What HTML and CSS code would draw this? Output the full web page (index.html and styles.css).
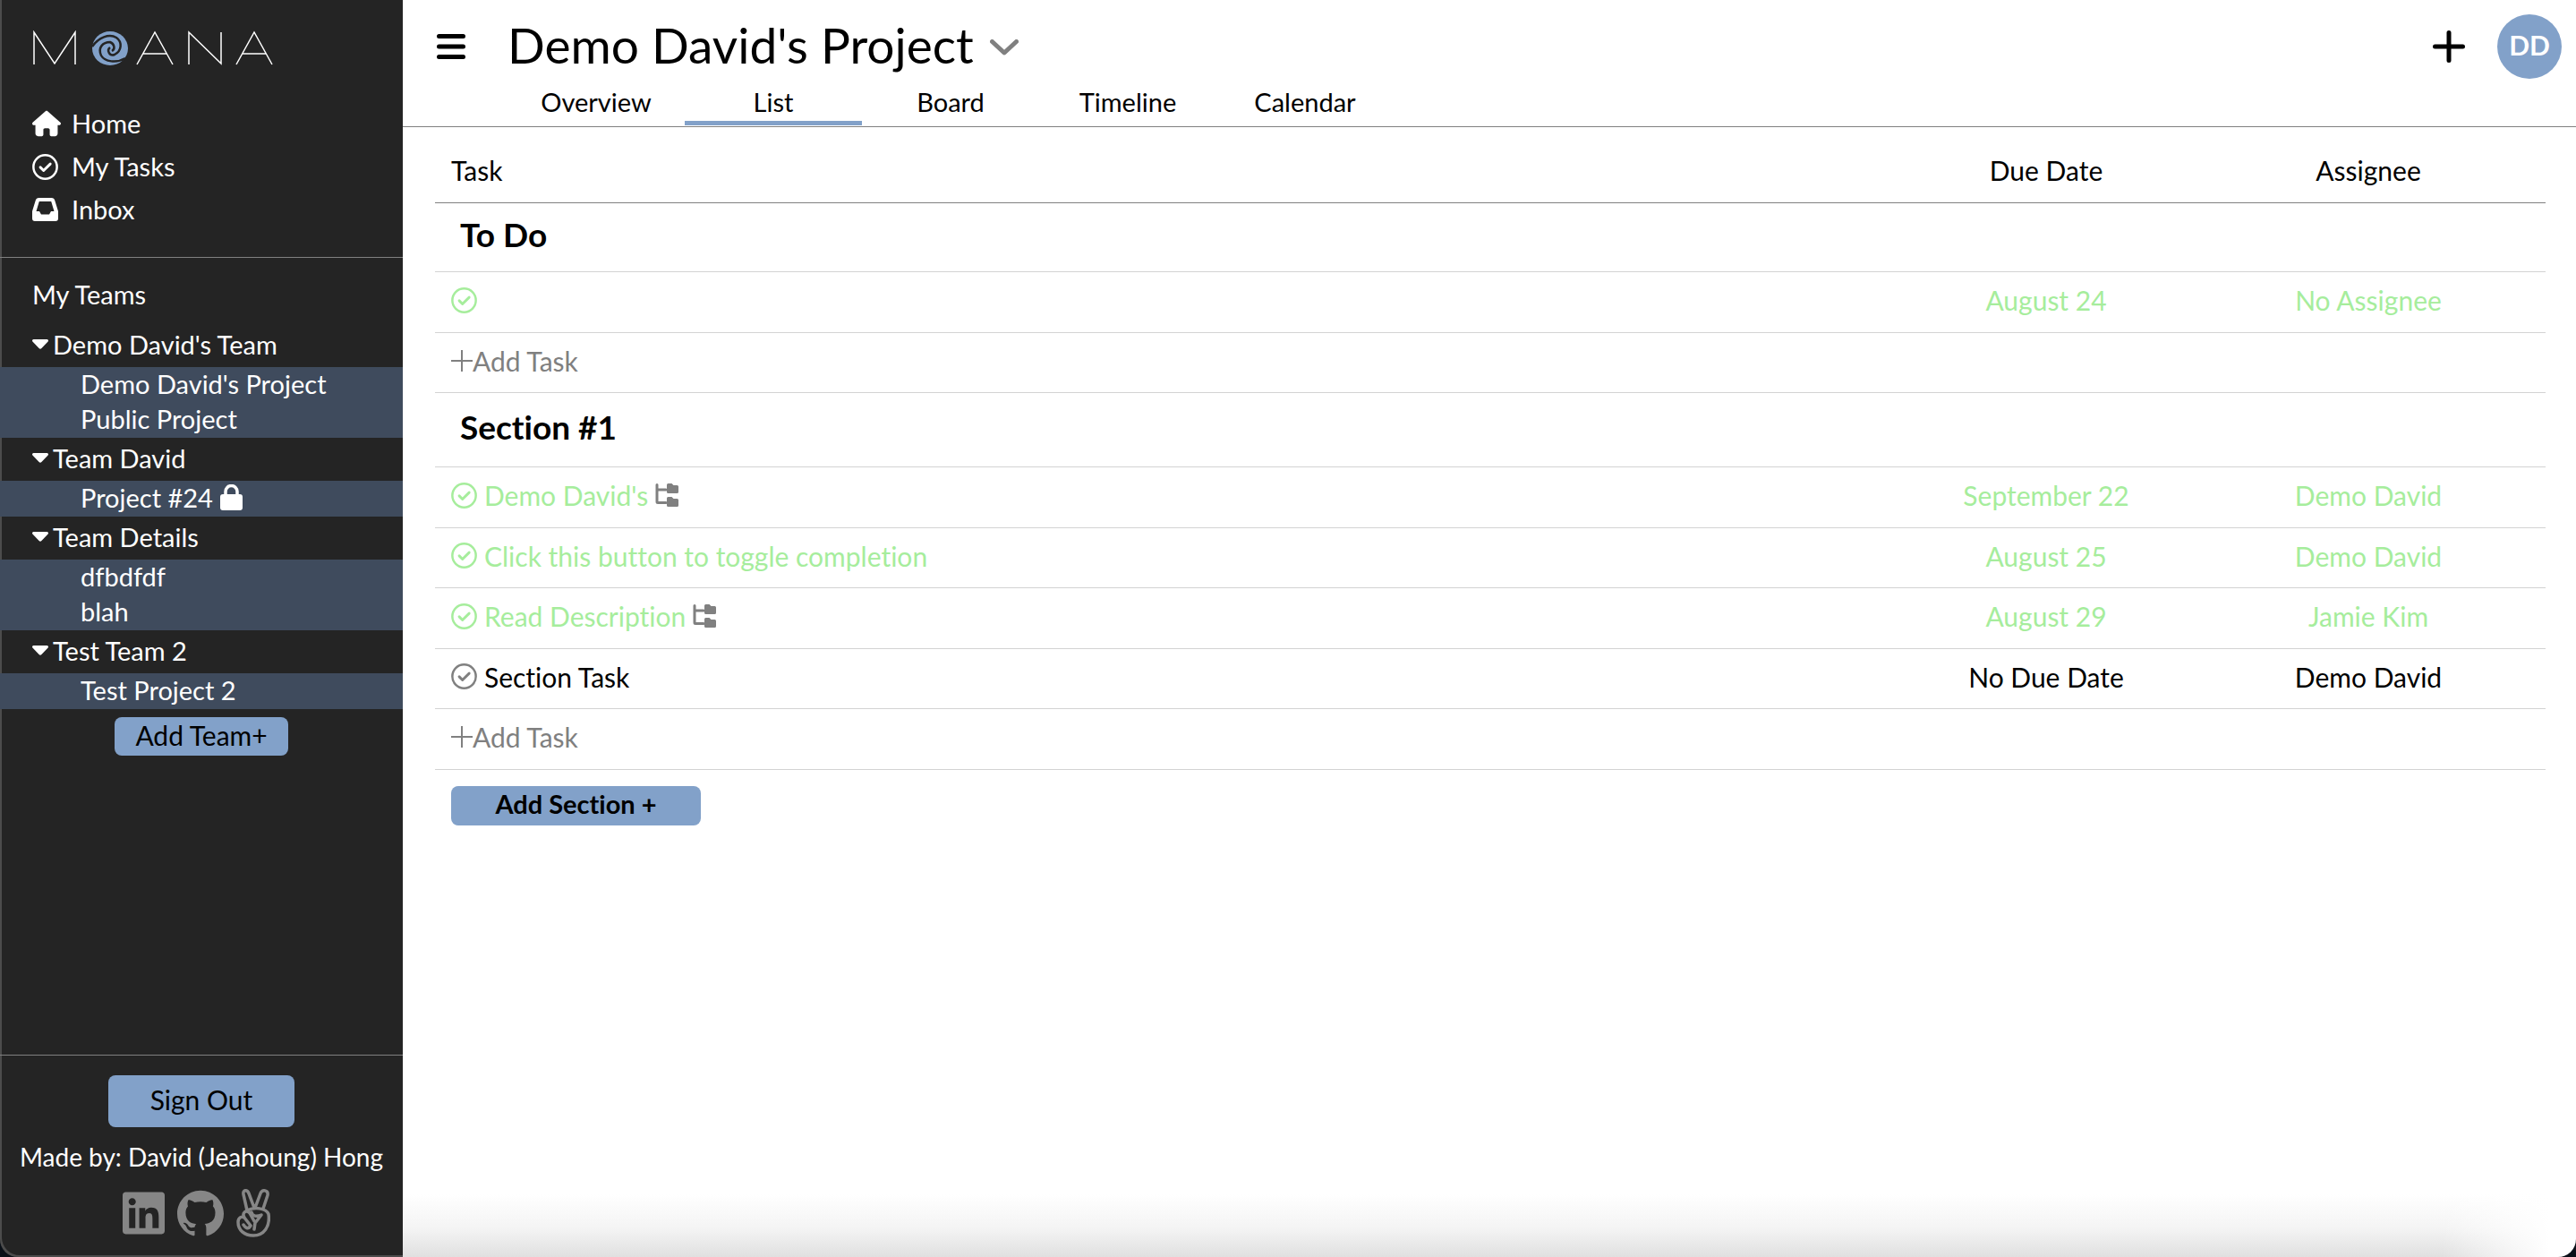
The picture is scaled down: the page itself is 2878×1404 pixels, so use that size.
FILE: index.html
```html
<!DOCTYPE html>
<html lang="en">
<head>
<meta charset="utf-8">
<title>Demo David's Project - Moana</title>
<link rel="stylesheet" href="styles.css">
</head>
<body>
<svg class="sprite" aria-hidden="true">
  <symbol id="check" viewBox="0 0 512 512"><circle cx="256" cy="256" r="232" fill="none" stroke="currentColor" stroke-width="44"/><path d="M160 262l64 64L356 196" fill="none" stroke="currentColor" stroke-width="52" stroke-linecap="round" stroke-linejoin="round"/></symbol>
  <symbol id="caret" viewBox="0 0 18 12"><path d="M1.500 0h15a1.500 1.500 0 0 1 1.100 2.500l-7.200 7.600a2 2 0 0 1-2.800 0L.4 2.500A1.500 1.500 0 0 1 1.500 0z" fill="currentColor"/></symbol>
  <symbol id="tree" viewBox="0 0 26 26"><path d="M2 1.500V20.500a1 1 0 0 0 1 1H12M2 7H12" fill="none" stroke="currentColor" stroke-width="3" stroke-linecap="round"/><path d="M14.500 0h4l2 2h4A1.500 1.500 0 0 1 26 3.500v6A1.500 1.500 0 0 1 24.500 11h-10A1.500 1.500 0 0 1 13 9.500v-8A1.500 1.500 0 0 1 14.500 0zM14.500 15h4l2 2h4a1.500 1.500 0 0 1 1.500 1.500v6a1.500 1.500 0 0 1-1.500 1.500h-10a1.500 1.500 0 0 1-1.500-1.500v-8a1.500 1.500 0 0 1 1.500-1.500z" fill="currentColor"/></symbol>
</svg>
<div class="app">
  <aside class="sidebar">
    <a href="#" class="logo" aria-label="Moana home">
      <svg width="272" height="40" viewBox="0 0 272 40" fill="none" stroke="#fff" stroke-width="1.500">
        <path d="M2 38V2L25 37 48 2V38M117 38 137 2 157 38M124 26H150M175 38V2L211 37V2M228 38 248 2 268 38M235 26H261"/>
        <ellipse cx="87" cy="20" rx="20" ry="19" fill="#82a1c9" stroke="none"/>
        <path d="M67 18C74 8 86 3 94 8 101 13 100 23 92 27 86 29 83 22 87 19M104 31C94 37 81 35 77 28 73 19 79 13 87 13 92 15 93 21 89 23" stroke="#242424" stroke-width="2.500"/>
      </svg>
    </a>
    <nav class="main-nav">
      <a href="#"><svg width="32" height="30" viewBox="0 0 576 512"><path fill="currentColor" d="M575.800 255.500c0 18-15 32.100-32 32.100h-32l.7 160.200c0 35-24 64.200-56 64.200h-72.500c-22 0-32-16-32-40v-88c0-17.700-14.300-32-32-32h-64c-17.700 0-32 14.300-32 32v88c0 24-12 40-32 40H120c-32 0-56-25-56-56V287.600H32c-18 0-32-14-32-32.100 0-9 3-17 10-24L266.400 8c7-7 15-8 22-8s15 2 21 7L564.800 231.500c8 7 12 15 11 24z"/></svg>Home</a>
      <a href="#"><svg width="29" height="29"><use href="#check"/></svg>My Tasks</a>
      <a href="#"><svg width="29" height="26" viewBox="0 0 29 26"><path fill="currentColor" fill-rule="evenodd" d="M7.500 0h14a4 4 0 0 1 3.800 3L29 15v8a3 3 0 0 1-3 3H3a3 3 0 0 1-3-3v-8L3.700 3A4 4 0 0 1 7.500 0zm.3 4L4.500 15H8l2 3.500h9L21 15h3.500L21.200 4z"/></svg>Inbox</a>
    </nav>
    <section class="teams">
      <h2>My Teams</h2>
      <h3><svg width="18" height="12"><use href="#caret"/></svg>Demo David's Team</h3>
      <ul><li><a href="#">Demo David's Project</a></li><li><a href="#">Public Project</a></li></ul>
      <h3><svg width="18" height="12"><use href="#caret"/></svg>Team David</h3>
      <ul><li><a href="#">Project #24<svg width="25" height="29" viewBox="0 0 25 29"><path d="M6 13V8a6.500 6.500 0 0 1 13 0v5" fill="none" stroke="currentColor" stroke-width="3.500"/><rect y="11" width="25" height="18" rx="3" fill="currentColor"/></svg></a></li></ul>
      <h3><svg width="18" height="12"><use href="#caret"/></svg>Team Details</h3>
      <ul><li><a href="#">dfbdfdf</a></li><li><a href="#">blah</a></li></ul>
      <h3><svg width="18" height="12"><use href="#caret"/></svg>Test Team 2</h3>
      <ul><li><a href="#">Test Project 2</a></li></ul>
      <button class="btn add-team">Add Team+</button>
    </section>
    <footer class="credits">
      <button class="btn sign-out">Sign Out</button>
      <p>Made by: David (Jeahoung) Hong</p>
      <div class="social">
        <a href="#" aria-label="LinkedIn"><svg width="47" height="54" viewBox="0 0 448 512"><path fill="currentColor" d="M416 32H31.900C14.300 32 0 46.500 0 64.300v383.400C0 465.500 14.300 480 31.900 480H416c17.600 0 32-14.500 32-32.300V64.300c0-17.800-14.400-32.300-32-32.300zM135.400 416H69V202.200h66.500V416zm-33.200-243c-21.300 0-38.500-17.300-38.500-38.500S80.900 96 102.200 96c21.200 0 38.500 17.300 38.500 38.500 0 21.300-17.200 38.500-38.500 38.500zm282.100 243h-66.400V312c0-24.800-.5-56.700-34.500-56.700-34.600 0-39.900 27-39.900 54.900V416h-66.400V202.200h63.700v29.200h.9c8.900-16.800 30.600-34.500 62.900-34.500 67.200 0 79.700 44.300 79.700 101.900V416z"/></svg></a>
        <a href="#" aria-label="GitHub"><svg width="52" height="52" viewBox="0 0 24 24"><path fill="currentColor" d="M12 .297c-6.630 0-12 5.373-12 12 0 5.303 3.438 9.800 8.205 11.385.6.113.82-.258.82-.577 0-.285-.01-1.040-.015-2.040-3.338.724-4.042-1.610-4.042-1.610C4.422 18.070 3.633 17.700 3.633 17.700c-1.087-.744.084-.729.084-.729 1.205.084 1.838 1.236 1.838 1.236 1.070 1.835 2.809 1.305 3.495.998.108-.776.417-1.305.76-1.605-2.665-.3-5.466-1.332-5.466-5.930 0-1.310.465-2.380 1.235-3.220-.135-.303-.54-1.523.105-3.176 0 0 1.005-.322 3.300 1.230.96-.267 1.980-.399 3-.405 1.020.006 2.040.138 3 .405 2.280-1.552 3.285-1.230 3.285-1.230.645 1.653.24 2.873.12 3.176.765.840 1.230 1.910 1.230 3.220 0 4.610-2.805 5.625-5.475 5.920.42.360.81 1.096.81 2.220 0 1.606-.015 2.896-.015 3.286 0 .315.210.69.825.57C20.565 22.092 24 17.592 24 12.297c0-6.627-5.373-12-12-12"/></svg></a>
        <a href="#" aria-label="Wellfound"><svg width="38" height="54" viewBox="0 0 38 54" fill="none" stroke="currentColor" stroke-width="3.500" stroke-linejoin="round" stroke-linecap="round"><path d="M12 24 8 6C7 1 12 0 14 5L20 21M21 21 27 5C29 0 36 1 35 7L30 22M12 24C20 20 33 21 36 28 38 42 31 52 19 52 9 52 2 46 2 37 2 32 6 30 9 32L16 41M9 32C6 27 11 22 15 27L20 36M17 26C18 31 23 31 28 29L21 38 20 45M16 41C13 46 10 43 8 40"/></svg></a>
      </div>
    </footer>
  </aside>
  <main class="content">
    <header class="topbar">
      <button class="icon-btn menu" aria-label="Menu"><svg width="32" height="28" viewBox="0 0 32 28" stroke="#000" stroke-width="5" stroke-linecap="round"><path d="M2.500 2.500H29.500M2.500 14H29.500M2.500 25.500H29.500"/></svg></button>
      <div class="heading">
        <div class="title"><h1>Demo David's Project</h1><button class="icon-btn" aria-label="Project options"><svg width="32" height="18" viewBox="0 0 32 18" fill="none" stroke="#808080" stroke-width="5" stroke-linecap="round" stroke-linejoin="round"><path d="M2.500 2.500 16 15 29.500 2.500"/></svg></button></div>
        <nav class="tabs"><a href="#">Overview</a><a href="#" class="active">List</a><a href="#">Board</a><a href="#">Timeline</a><a href="#">Calendar</a></nav>
      </div>
      <div class="actions">
        <button class="icon-btn" aria-label="Create"><svg width="36" height="36" viewBox="0 0 36 36" stroke="#000" stroke-width="5" stroke-linecap="round"><path d="M2.500 18H33.500M18 2.500V33.500"/></svg></button>
        <button class="avatar">DD</button>
      </div>
    </header>
    <section class="list">
      <table>
        <thead><tr><th>Task</th><th class="meta">Due Date</th><th class="meta">Assignee</th></tr></thead>
        <tbody>
          <tr class="section first"><th colspan="3">To Do</th></tr>
          <tr class="done"><td><div class="task"><svg width="29" height="29"><use href="#check"/></svg></div></td><td>August 24</td><td>No Assignee</td></tr>
          <tr><td colspan="3"><button class="add-task"><svg width="24" height="24" viewBox="0 0 24 24" stroke="currentColor" stroke-width="2"><path d="M0 12H24M12 0V24"/></svg>Add Task</button></td></tr>
        </tbody>
        <tbody>
          <tr class="section"><th colspan="3">Section #1</th></tr>
          <tr class="done"><td><div class="task"><svg width="29" height="29"><use href="#check"/></svg>Demo David's<svg class="sub" width="26" height="26"><use href="#tree"/></svg></div></td><td>September 22</td><td>Demo David</td></tr>
          <tr class="done"><td><div class="task"><svg width="29" height="29"><use href="#check"/></svg>Click this button to toggle completion</div></td><td>August 25</td><td>Demo David</td></tr>
          <tr class="done"><td><div class="task"><svg width="29" height="29"><use href="#check"/></svg>Read Description<svg class="sub" width="26" height="26"><use href="#tree"/></svg></div></td><td>August 29</td><td>Jamie Kim</td></tr>
          <tr><td><div class="task"><svg class="sub" width="29" height="29"><use href="#check"/></svg>Section Task</div></td><td>No Due Date</td><td>Demo David</td></tr>
          <tr><td colspan="3"><button class="add-task"><svg width="24" height="24" viewBox="0 0 24 24" stroke="currentColor" stroke-width="2"><path d="M0 12H24M12 0V24"/></svg>Add Task</button></td></tr>
        </tbody>
      </table>
      <button class="btn add-section">Add Section +</button>
    </section>
  </main>
</div>
</body>
</html>
```
FILE: styles.css
```css
* { box-sizing: border-box; }
body { margin: 0; font-family: Lato, "Liberation Sans", sans-serif; font-size: 30px; line-height: 40px; font-variant-ligatures: none; color: #000; background: #0a1018; }
h1, h2, h3, p, ul { margin: 0; padding: 0; font-weight: 400; font-size: inherit; }
ul { list-style: none; }
a { color: inherit; text-decoration: none; }
svg { display: block; flex: none; }
button { font: inherit; font-variant-ligatures: none; color: inherit; border: 0; padding: 0; background: none; }
.sprite { position: absolute; width: 0; height: 0; }
.app { display: flex; min-height: 100vh; }
.sidebar { width: 450px; flex: none; display: flex; flex-direction: column; background: #242424; color: #fff; font-size: 29px; border-bottom-left-radius: 20px; box-shadow: inset 2px -2px 0 #4c4c4c; }
.logo { padding: 34px 36px 0; }
.main-nav { display: flex; flex-direction: column; gap: 8px; padding: 44px 36px 33px; border-bottom: 1px solid #808080; }
.main-nav a { display: grid; grid-template-columns: 32px auto; align-items: center; justify-content: start; height: 40px; gap: 12px; }
.teams { display: flex; flex-direction: column; flex: 1; }
.teams h2 { padding: 21px 36px 13px; }
.teams h3 { display: flex; align-items: center; gap: 5px; padding: 0 36px 2px; height: 48px; }
.teams ul { background: #3f4b5d; padding-bottom: 1px; }
.teams li a { display: flex; align-items: center; gap: 8px; padding: 0 0 2px 90px; height: 39px; }
.btn { background: #82a1c9; color: #000; border-radius: 8px; padding-bottom: 4px; font-size: 30px; }
.add-team { width: 194px; height: 43px; margin-top: 9px; align-self: center; }
.credits { display: flex; flex-direction: column; align-items: center; border-top: 1px solid #808080; padding: 22px 0; }
.sign-out { width: 208px; height: 58px; }
.credits p { margin: 13px 0 16px; font-size: 28px; }
.social { display: flex; align-items: center; gap: 14px; padding-right: 12px; color: #868686; }
.content { flex: 1; min-width: 0; border-bottom-right-radius: 20px; background: linear-gradient(to right, transparent calc(100% - 150px), #fff calc(100% - 30px)), linear-gradient(#fff calc(100% - 70px), #f4f4f4 calc(100% - 32px), #e0e0e0); }
.topbar { display: flex; height: 142px; padding: 16px 16px 0 38px; border-bottom: 1px solid #808080; }
.menu { align-self: flex-start; margin: 22px 47px 0 0; }
.heading { flex: 1; display: flex; flex-direction: column; justify-content: space-between; }
.title { display: flex; align-items: center; gap: 18px; }
h1 { font-size: 55px; line-height: 68px; padding-bottom: 6px; }
.tabs { display: flex; padding-bottom: 1px; font-size: 29px; line-height: 42px; }
.tabs a { width: 198px; height: 47px; text-align: center; border-bottom: 5px solid transparent; }
.tabs .active { border-color: #82a1c9; }
.actions { display: flex; align-items: center; align-self: flex-start; gap: 36px; }
.avatar { width: 72px; height: 72px; padding-bottom: 4px; border-radius: 50%; background: #82a1c9; color: #fff; font-weight: 700; }
.list { padding: 16px 34px 0 36px; }
table { width: 100%; border-collapse: separate; border-spacing: 0; table-layout: fixed; }
th, td { height: 68px; padding: 0 0 5px; text-align: center; font-weight: 400; border-bottom: 1px solid #d3d3d3; }
tr:nth-child(odd) td { height: 67px; }
th:first-child, td:first-child { text-align: left; padding-left: 18px; }
th:last-child, td:last-child { padding-right: 18px; }
thead th { border-bottom-color: #808080; height: 69px; }
.meta { width: 360px; }
.meta:last-child { width: 378px; }
.section th { height: 83px; font-size: 37px; font-weight: 700; }
.section.first th { height: 77px; }
.section th:first-child { padding: 0 0 7px 28px; }
.done { color: #a6ed9c; }
.task { display: flex; align-items: center; gap: 8px; }
.sub { color: #808080; }
.add-task { display: flex; align-items: center; color: #808080; }
.add-section { width: 279px; height: 44px; margin: 18px 0 0 18px; font-size: 29px; font-weight: 700; }
```
